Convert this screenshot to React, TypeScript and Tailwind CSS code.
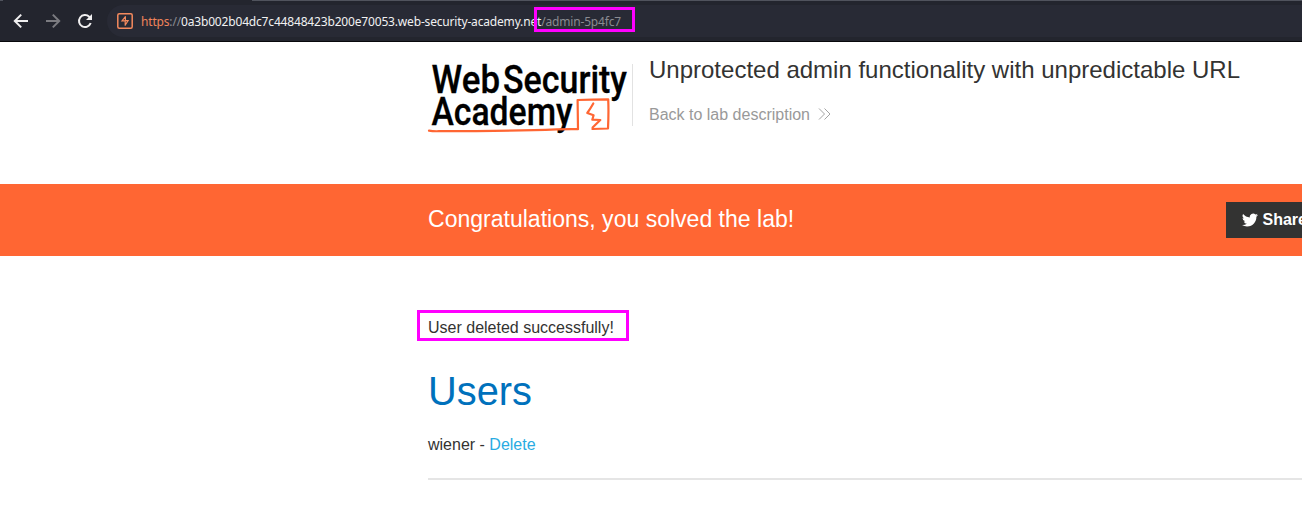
import React from "react";

function BrowserBar() {
  return (
    <div className="flex h-[42px] flex-col border-b border-[#08090c] bg-[#23252e]">
      <div className="flex h-px shrink-0">
        <div className="w-[3px] bg-[#50535d]" />
        <div className="w-[249px]" />
        <div className="flex-1 bg-[#50535d]" />
      </div>
      <div className="flex flex-1 items-center">
        <svg className="ml-[13px] h-4 w-4 shrink-0" viewBox="0 0 16 16" fill="none" stroke="#f0eff0" strokeWidth="2">
          <path d="M15 8H2M8.2 1.6L1.8 8l6.4 6.4" />
        </svg>
        <svg className="ml-4 h-4 w-4 shrink-0" viewBox="0 0 16 16" fill="none" stroke="#7b7b80" strokeWidth="2">
          <path d="M1 8h13M7.8 1.6L14.2 8l-6.4 6.4" />
        </svg>
        <svg className="ml-4 h-4 w-4 shrink-0" viewBox="0 0 16 16" fill="none" stroke="#f0eff0" strokeWidth="2">
          <path d="M13.7 10a6 6 0 1 1-1.5-6.3l1.6 1.6" />
          <path d="M15 1v6H9z" fill="#f0eff0" stroke="none" />
        </svg>
        <div className="ml-[14px] flex h-8 flex-1 items-center rounded-l-full bg-[#282a35] pl-[10px]">
          <svg className="h-4 w-4 shrink-0" viewBox="0 0 16 16" fill="none" stroke="#f58a5e">
            <rect x="0.8" y="0.8" width="14.4" height="14.4" rx="1.5" strokeWidth="1.5" />
            <path d="M8.600 3.300L5 7.900h3.200v4.900M8.400 3.300v4M8.400 7.600h2.700l-2.800 4.400" strokeWidth="1.200" />
          </svg>
          <div className="ml-2 whitespace-pre pt-[2px] font-['Noto_Sans',sans-serif] text-[12px] leading-4 tracking-[-0.172px] text-[#8a8b91]">
            <span className="text-[#f0845b]">https</span>://<span className="text-[#f1f1f2]">0a3b002b04dc7c44848423b200e70053.web-security-academy.net</span>/admin-5p4fc7
          </div>
        </div>
      </div>
    </div>
  );
}

function AcademyLogo() {
  return (
    <svg className="h-[72px] w-[204px] shrink-0 overflow-visible" viewBox="428 62 204 72" fill="none">
      <g fill="#000" stroke="#000" strokeWidth="0.300" fontFamily="Roboto, sans-serif" fontWeight="500" fontSize="38">
        <text x="431.500" y="92.800" textLength="68.500" lengthAdjust="spacingAndGlyphs">Web</text>
        <text x="503" y="92.800" textLength="124" lengthAdjust="spacingAndGlyphs">Security</text>
        <text x="431.500" y="125" textLength="141" lengthAdjust="spacingAndGlyphs">Academy</text>
      </g>
      <g stroke="#ff6633" strokeLinejoin="round" strokeLinecap="round">
        <path d="M429 130.6q4 .8 10 .6 70 0 118-1.8 12-.4 21-.2l-.4-29.2q14-.6 30.600-.7.600 13-.2 29.200-7 .2-15.600.5" strokeWidth="2.200" />
        <path d="M593.300 103.500q-2.600 4.600-6 9.500l6.300 2.200-1.300 4.500 8 .3-7.700 7.500" strokeWidth="2.200" />
      </g>
    </svg>
  );
}

export default function App() {
  return (
    <div className="relative h-[514px] w-[1302px] overflow-hidden bg-white font-['Liberation_Sans',Arial,sans-serif] text-base text-[#333332]">
      <BrowserBar />
      <header className="flex h-[142px] pl-[428px] pt-5">
        <AcademyLogo />
        <div className="mt-[2px] h-[62px] w-px bg-[#e2e2e2]" />
        <div className="pl-4">
          <h1 className="-mt-[6px] whitespace-nowrap text-[24px] leading-7">Unprotected admin functionality with unpredictable URL</h1>
          <a className="mt-[21px] flex items-center text-base leading-5 text-[#999999]">
            Back to lab description
            <svg className="mb-[2px] ml-2 h-3 w-[13px]" viewBox="0 0 13 12" fill="none" stroke="#999999" strokeWidth="0.900">
              <path d="M1 .5L6.500 6 1 11.500M6.500.5L12 6l-5.500 5.500" />
            </svg>
          </a>
        </div>
      </header>
      <section className="flex h-[72px] items-center justify-between bg-[#ff6633] pl-[428px] text-white">
        <p className="pb-[2px] text-[23.040px] leading-7">Congratulations, you solved the lab!</p>
        <button className="flex h-9 w-[76px] items-center overflow-hidden bg-[#333332] pl-4 font-bold">
          <svg className="h-4 w-4 shrink-0" viewBox="0 0 24 24" fill="#fff">
            <path d="M23.950 4.570a10 10 0 0 1-2.820.78 4.960 4.960 0 0 0 2.160-2.730 9.900 9.900 0 0 1-3.130 1.200 4.920 4.920 0 0 0-8.380 4.480C7.690 8.090 4.070 6.130 1.640 3.160a4.920 4.920 0 0 0 1.520 6.570 4.900 4.900 0 0 1-2.230-.61v.06a4.920 4.920 0 0 0 3.950 4.830 5 5 0 0 1-2.210.08 4.940 4.940 0 0 0 4.600 3.420A9.870 9.870 0 0 1 0 19.540a13.990 13.990 0 0 0 7.550 2.210c9.050 0 14-7.500 14-13.980 0-.21 0-.42-.02-.63a9.940 9.940 0 0 0 2.420-2.570z" />
          </svg>
          <span className="ml-[4.500px] pb-px">Share</span>
        </button>
      </section>
      <main className="pl-[428px] pt-[62px]">
        <p className="leading-5">User deleted successfully!</p>
        <h2 className="mt-[29px] text-[39.810px] leading-[48px] text-[#0071bc]">Users</h2>
        <p className="mt-5 leading-5">wiener - <a className="text-[#29abe2]">Delete</a></p>
        <hr className="mt-[23px] border-t-2 border-[#e5e5e5]" />
      </main>
      <div className="absolute left-[534px] top-[7px] h-[25px] w-[101px] border-[3px] border-[#ff00ff]" />
      <div className="absolute left-[417px] top-[310px] h-[31px] w-[212px] border-[3px] border-[#ff00ff]" />
    </div>
  );
}
